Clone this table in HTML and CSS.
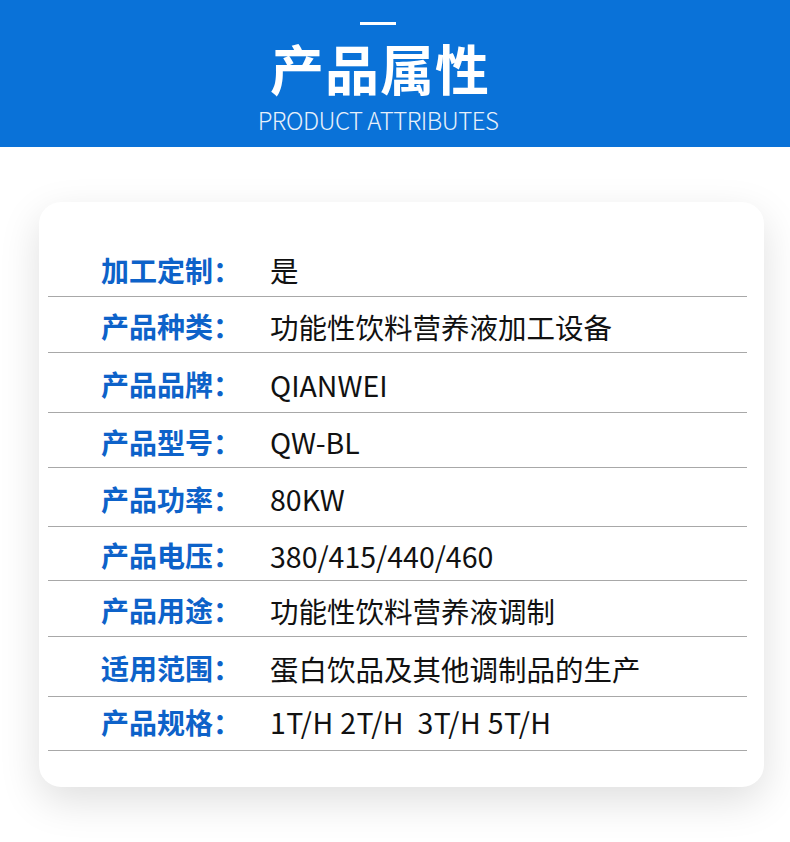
FILE: index.html
```html
<!DOCTYPE html>
<html lang="zh-CN">
<head>
  <meta charset="UTF-8">
  <meta name="viewport" content="width=device-width, initial-scale=1.0">
  <title>产品属性</title>
  <link rel="stylesheet" href="styles.css">
</head>
<body>
  <div class="banner">
    <span class="banner-bar"></span>
    <h1>产品属性</h1>
    <p class="banner-sub">PRODUCT ATTRIBUTES</p>
  </div>

  <div class="card">
    <div class="attrs">
      <div class="row"><span class="label">加工定制：</span><span class="value">是</span></div>
      <div class="row"><span class="label">产品种类：</span><span class="value">功能性饮料营养液加工设备</span></div>
      <div class="row"><span class="label">产品品牌：</span><span class="value">QIANWEI</span></div>
      <div class="row"><span class="label">产品型号：</span><span class="value">QW-BL</span></div>
      <div class="row"><span class="label">产品功率：</span><span class="value">80KW</span></div>
      <div class="row"><span class="label">产品电压：</span><span class="value">380/415/440/460</span></div>
      <div class="row"><span class="label">产品用途：</span><span class="value">功能性饮料营养液调制</span></div>
      <div class="row"><span class="label">适用范围：</span><span class="value">蛋白饮品及其他调制品的生产</span></div>
      <div class="row last"><span class="label">产品规格：</span><span class="value spaced">1T/H 2T/H&nbsp; 3T/H 5T/H</span></div>
    </div>
  </div>
</body>
</html>
```

FILE: styles.css
```css
body {
  margin: 0;
  padding: 0;
  background-color: #fff;
  font-family: "Noto Sans CJK SC", "Noto Sans", sans-serif;
  width: 790px;
  height: 842px;
  overflow: hidden;
}
.banner {
  background-color: #0a72d8;
  height: 147px;
  display: flex;
  flex-direction: column;
  align-items: center;
  padding-right: 34px;
  color: #fff;
}
.banner-bar {
  display: block;
  width: 36px;
  height: 3px;
  background-color: #fff;
  margin-top: 22px;
}
.banner h1 {
  margin: 14px 0 0;
  font-size: 54px;
  line-height: 58px;
  font-weight: 700;
  letter-spacing: 1px;
  padding-left: 4px;
}
.banner-sub {
  margin: 9px 0 0;
  font-size: 24px;
  line-height: 28px;
  font-weight: 300;
  letter-spacing: -0.5px;
  color: #e6f0fb;
}
.card {
  box-sizing: border-box;
  margin: 55px 26px 0 39px;
  height: 585px;
  background-color: #fff;
  border-radius: 22px;
  box-shadow: 0 14px 40px rgba(0, 0, 0, 0.13);
  padding: 38px 17px 0 9px;
}
.attrs {
  display: grid;
  grid-template-rows: 57px 56px 60px 55px 59px 54px 56px 60px 54px;
}
.row {
  display: flex;
  align-items: center;
  padding-top: 3px;
  border-bottom: 1px solid #a8a8a8;
}
.row.last {
  padding-top: 0;
  padding-bottom: 4px;
}
.label {
  width: 222px;
  padding-left: 53px;
  box-sizing: border-box;
  flex-shrink: 0;
  color: #0d62c9;
  font-size: 28px;
  font-weight: 700;
  white-space: nowrap;
}
.value {
  color: #111;
  font-size: 28.5px;
  white-space: nowrap;
}
.spaced {
  letter-spacing: 0.4px;
}
```
